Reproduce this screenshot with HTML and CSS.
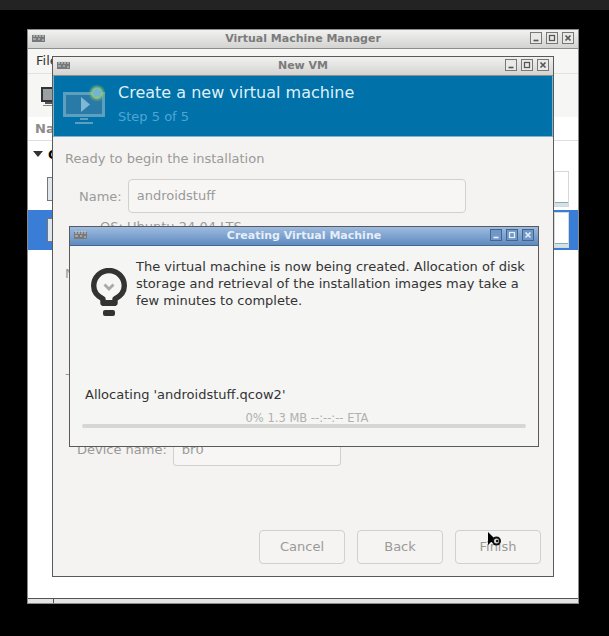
FILE: index.html
```html
<!DOCTYPE html>
<html lang="en">
<head>
    <meta charset="UTF-8">
    <meta name="viewport" content="width=device-width, initial-scale=1.0">
    <title>Creating Virtual Machine</title>
    <link rel="stylesheet" href="styles.css">
</head>
<body>
    <div class="topbar"></div>

    <div class="desktop">
        <!-- Janela principal -->
        <div class="window manager">
            <div class="titlebar">
                <svg class="app-icon" viewBox="0 0 13 8"><use href="#chip"/></svg>
                <span class="title">Virtual Machine Manager</span>
                <div class="controls">
                    <span class="ctl"><svg viewBox="0 0 12 12"><path class="min" d="M3 9h6"/></svg></span>
                    <span class="ctl"><svg viewBox="0 0 12 12"><rect class="max" x="3" y="3" width="6" height="6"/></svg></span>
                    <span class="ctl"><svg viewBox="0 0 12 12"><path class="cls" d="M3 3l6 6M9 3l-6 6"/></svg></span>
                </div>
            </div>
            <div class="menubar">File</div>
            <div class="toolbar">
                <svg class="tool-icon" viewBox="0 0 14 20">
                    <rect x="1" y="1" width="13" height="13" fill="#9aa0a4" stroke="#333" stroke-width="2"/>
                    <rect x="4" y="15" width="8" height="2" fill="#555"/>
                    <rect x="2" y="18" width="12" height="1" fill="#888"/>
                </svg>
            </div>
            <div class="list-head">Na</div>
            <div class="group-row"><span class="arrow"></span><span class="group-name">Q</span></div>
            <div class="vm-row"><span class="vm-icon"></span><span class="thumb"><i></i></span></div>
            <div class="vm-row selected"><span class="vm-icon"></span><span class="thumb"><i></i></span></div>
            <div class="filler"></div>
            <div class="statusbar"><span class="status-tick"></span></div>
        </div>

        <!-- Assistente -->
        <div class="window wizard">
            <div class="titlebar">
                <svg class="app-icon" viewBox="0 0 13 8"><use href="#chip"/></svg>
                <span class="title">New VM</span>
                <div class="controls">
                    <span class="ctl"><svg viewBox="0 0 12 12"><path class="min" d="M3 9h6"/></svg></span>
                    <span class="ctl"><svg viewBox="0 0 12 12"><rect class="max" x="3" y="3" width="6" height="6"/></svg></span>
                    <span class="ctl"><svg viewBox="0 0 12 12"><path class="cls" d="M3 3l6 6M9 3l-6 6"/></svg></span>
                </div>
            </div>
            <div class="banner">
                <svg class="banner-icon" viewBox="0 0 46 44">
                    <defs>
                        <radialGradient id="glow">
                            <stop offset="0.45" stop-color="#a8dc6e"/>
                            <stop offset="1" stop-color="#6aa860" stop-opacity="0"/>
                        </radialGradient>
                    </defs>
                    <rect x="1.500" y="9.500" width="39" height="22" fill="#2a7aa8" stroke="#5e9fc0" stroke-width="3"/>
                    <path d="M18 13v15l9-7.500z" fill="#7fb8d4"/>
                    <rect x="17" y="34" width="8" height="2" fill="#5e9fc0"/>
                    <rect x="12" y="38" width="18" height="2" fill="#5e9fc0"/>
                    <circle cx="34" cy="9" r="9" fill="url(#glow)"/>
                    <path d="M34 3.500l5 4-2 5.500h-6l-2-5.500z" fill="#74b4d0"/>
                </svg>
                <div class="banner-text">
                    <div class="banner-title">Create a new virtual machine</div>
                    <div class="banner-step">Step 5 of 5</div>
                </div>
            </div>
            <div class="wizard-body">
                <p class="ready">Ready to begin the installation</p>
                <div class="form-row name-row">
                    <label>Name:</label>
                    <div class="field name-field">androidstuff</div>
                </div>
                <p class="os-line">OS: Ubuntu 24.04 LTS</p>
                <p class="stub stub-n">N</p>
                <p class="stub stub-dash">-</p>
                <div class="form-row device-row">
                    <label>Device name:</label>
                    <div class="field device-field">br0</div>
                </div>
                <div class="actions">
                    <button>Cancel</button>
                    <button>Back</button>
                    <button>Finish</button>
                </div>
            </div>
        </div>

        <!-- Dialogo de progresso -->
        <div class="window progress">
            <div class="titlebar active">
                <svg class="app-icon" viewBox="0 0 13 8"><use href="#chip"/></svg>
                <span class="title">Creating Virtual Machine</span>
                <div class="controls">
                    <span class="ctl"><svg viewBox="0 0 12 12"><path class="min" d="M3 9h6"/></svg></span>
                    <span class="ctl"><svg viewBox="0 0 12 12"><rect class="max" x="3" y="3" width="6" height="6"/></svg></span>
                    <span class="ctl"><svg viewBox="0 0 12 12"><path class="cls" d="M3 3l6 6M9 3l-6 6"/></svg></span>
                </div>
            </div>
            <div class="progress-body">
                <div class="message">
                    <svg class="bulb" viewBox="0 0 36 48">
                        <path d="M12 35v-4C6 28 2.700 23 2.700 17.800a15.300 15.300 0 0 1 30.600 0c0 5.200-3.300 10.200-9.300 13.200v4z" fill="#f6f6f5" stroke="#333" stroke-width="5.400" stroke-linejoin="round"/>
                        <path d="M13.500 16.500l4.500 4.500 4.500-4.500" fill="none" stroke="#a9a9a9" stroke-width="2.800"/>
                        <rect x="11" y="32" width="14" height="6" fill="#333"/>
                        <rect x="12" y="42" width="12" height="6" rx="2" fill="#333"/>
                    </svg>
                    <p>The virtual machine is now being created. Allocation of disk storage and retrieval of the installation images may take a few minutes to complete.</p>
                </div>
                <div class="allocating">Allocating 'androidstuff.qcow2'</div>
                <div class="progress-label">0% 1.3 MB --:--:-- ETA</div>
                <div class="progress-track"></div>
            </div>
        </div>

        <!-- Cursor -->
        <svg class="cursor" viewBox="0 0 15 15">
            <path d="M1 0v13l3-3 3 1 2-3z" fill="#000"/>
            <circle cx="9.500" cy="9" r="4.500" fill="#111"/>
            <circle cx="9.500" cy="9" r="2.500" fill="#ddd"/>
            <circle cx="10.200" cy="9" r="1.300" fill="#111"/>
        </svg>
    </div>

    <svg class="defs" width="0" height="0">
        <symbol id="chip" viewBox="0 0 13 8">
            <rect x="0" y="1" width="13" height="7" fill="#77797b"/>
            <path d="M2 0v3M5 0v3M8 0v3M11 0v3" stroke="#d5d5d5"/>
            <path d="M1 5h3M6 5h2M10 6h2" stroke="#cfcfcf"/>
        </symbol>
    </svg>
</body>
</html>
```

FILE: styles.css
```css
/* Geral */
* {
    margin: 0;
    padding: 0;
    box-sizing: border-box;
    font-family: "DejaVu Sans", sans-serif;
}

html, body {
    height: 100%;
    overflow: hidden;
}

body {
    background-color: #000;
}

.topbar {
    height: 10px;
    background-color: #232323;
}

.defs {
    position: absolute;
}

.desktop {
    position: relative;
}

/* Janelas */
.window {
    position: absolute;
    display: flex;
    flex-direction: column;
    border: 1px solid #5a5a5a;
}

.manager {
    left: 27px;
    top: 19px;
    width: 552px;
    height: 575px;
    background-color: #fff;
    border-color: #8a8a8a;
}

.wizard {
    left: 52px;
    top: 46px;
    width: 502px;
    height: 521px;
    background-color: #f4f3f1;
}

.progress {
    left: 69px;
    top: 216px;
    width: 470px;
    height: 221px;
    background-color: #f5f5f4;
}

.titlebar {
    display: flex;
    align-items: center;
    flex: none;
    position: relative;
    height: 19px;
    padding: 0 4px 2px 4px;
    background: linear-gradient(#f1f1f0, #d3d3d2);
    border-bottom: 1px solid #8e8e8e;
}

.titlebar.active {
    background: linear-gradient(#9dbbdf, #5f8bc0);
    border-bottom-color: #46658c;
}

.app-icon {
    width: 13px;
    height: 8px;
}

.title {
    position: absolute;
    left: 0;
    right: 0;
    text-align: center;
    font-size: 11px;
    font-weight: bold;
    color: #7b7b7b;
}

.active .title {
    color: #e6eef8;
}

.controls {
    display: flex;
    gap: 4px;
    margin-left: auto;
    position: relative;
}

.ctl {
    width: 12px;
    height: 12px;
    background-color: #e9e9e8;
    border: 1px solid #777;
}

.ctl svg {
    display: block;
    width: 10px;
    height: 10px;
}

.ctl .min, .ctl .cls {
    stroke: #555;
    stroke-width: 2;
    fill: none;
}

.ctl .max {
    stroke: #555;
    stroke-width: 1.5;
    fill: none;
}

.active .ctl {
    background-color: #6f97c8;
    border-color: #46658c;
}

.active .ctl .min, .active .ctl .cls, .active .ctl .max {
    stroke: #e6eef8;
}

/* Janela principal */
.menubar {
    height: 25px;
    padding: 4px 0 0 8px;
    font-size: 13px;
    color: #333;
    background-color: #f6f6f5;
    border-bottom: 1px solid #e2e2e2;
}

.toolbar {
    height: 43px;
    padding: 13px 0 0 13px;
    background-color: #f6f6f5;
}

.tool-icon {
    display: block;
    width: 14px;
    height: 20px;
}

.list-head {
    height: 24px;
    padding: 4px 0 0 7px;
    font-size: 13px;
    font-weight: bold;
    color: #8c8c8c;
    border-bottom: 1px solid #dedede;
}

.group-row {
    display: flex;
    align-items: center;
    height: 26px;
    padding-left: 5px;
    font-size: 13px;
    font-weight: bold;
}

.arrow {
    border-left: 5px solid transparent;
    border-right: 5px solid transparent;
    border-top: 6px solid #333;
}

.group-name {
    margin-left: 5px;
}

.vm-row {
    display: flex;
    justify-content: space-between;
    align-items: center;
    height: 43px;
    padding: 0 9px 0 19px;
}

.vm-row.selected {
    height: 40px;
    background-color: #3a7dd6;
}

.vm-icon {
    width: 10px;
    height: 24px;
    background-color: #dfe6ec;
    border: 1px solid #777;
}

.thumb {
    position: relative;
    width: 15px;
    height: 36px;
    background-color: #fff;
    border: 1px solid #d8d8d8;
}

.thumb i {
    position: absolute;
    left: 0;
    right: 0;
    bottom: 0;
    height: 4px;
    background-color: #cfe3ea;
    border-top: 1px solid #8eaab4;
}

.filler {
    flex: 1;
}

.statusbar {
    height: 5px;
    padding-left: 25px;
    background-color: #e4e4e4;
    border-top: 1px solid #555;
}

.status-tick {
    display: block;
    width: 1px;
    height: 4px;
    background-color: #555;
}

/* Assistente */
.banner {
    display: flex;
    flex: none;
    height: 61px;
    padding: 7px 0 0 9px;
    gap: 9px;
    background-color: #0071a9;
    border: 1px solid #7fb3cf;
    border-top: none;
}

.banner-icon {
    width: 46px;
    height: 44px;
    margin-top: 1px;
}

.banner-title {
    font-size: 16px;
    line-height: 19px;
    color: #dff0f8;
}

.banner-step {
    margin-top: 7px;
    font-size: 13px;
    line-height: 16px;
    color: #4ea6d6;
}

.wizard-body {
    flex: 1;
    display: flex;
    flex-direction: column;
    padding: 14px 12px 12px;
    font-size: 13px;
    color: #9a9a98;
}

.ready {
    line-height: 16px;
}

.form-row {
    display: flex;
    align-items: center;
}

.form-row label {
    text-align: right;
}

.name-row {
    margin: 12px 0 0 14px;
    gap: 6px;
}

.field {
    padding-left: 8px;
    background-color: #f7f6f5;
    border: 1px solid #d2d0ce;
    border-radius: 4px;
}

.name-field {
    width: 338px;
    height: 34px;
    line-height: 31px;
}

.os-line {
    margin: 6px 0 0 35px;
    line-height: 16px;
}

.stub {
    line-height: 16px;
}

.stub-n {
    margin-top: 31px;
}

.stub-dash {
    margin-top: 84px;
}

.device-row {
    margin: 52px 0 0 12px;
    gap: 6px;
}

.device-row label {
    padding-bottom: 2px;
}

.device-field {
    width: 168px;
    height: 32px;
    line-height: 32px;
    border-top: none;
    border-radius: 0 0 4px 4px;
}

.actions {
    display: flex;
    justify-content: flex-end;
    gap: 12px;
    margin-top: auto;
}

button {
    width: 86px;
    height: 34px;
    padding-bottom: 2px;
    font-size: 13px;
    color: #9a9a98;
    background-color: #f5f4f2;
    border: 1px solid #d2d0ce;
    border-radius: 4px;
}

/* Progresso */
.progress-body {
    flex: 1;
    display: flex;
    flex-direction: column;
    padding: 12px 12px 0 12px;
    font-size: 13px;
    color: #333;
}

.message {
    display: flex;
    height: 129px;
}

.message p {
    flex: 1;
    margin: 0 -2px 0 9px;
    line-height: 17px;
}

.bulb {
    width: 36px;
    height: 48px;
    margin: 10px 0 0 9px;
    flex: none;
}

.allocating {
    padding-left: 3px;
    line-height: 16px;
}

.progress-label {
    margin-top: 10px;
    padding-left: 6px;
    text-align: center;
    font-size: 11.5px;
    line-height: 11px;
    color: #b0b0ae;
}

.progress-track {
    height: 4px;
    background-color: #d6d6d4;
    border-radius: 2px;
}

/* Cursor */
.cursor {
    position: absolute;
    left: 487px;
    top: 522px;
    width: 15px;
    height: 15px;
}
```
